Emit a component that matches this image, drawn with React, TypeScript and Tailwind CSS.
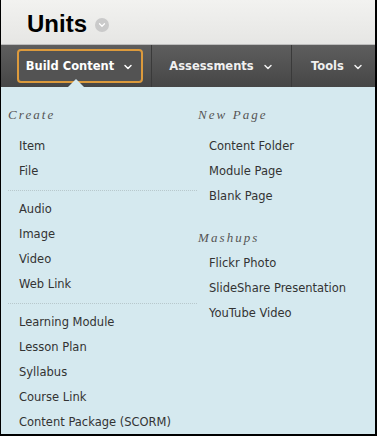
import { ChevronDown } from "lucide-react";

const leftGroups = [
  ["Item", "File"],
  ["Audio", "Image", "Video", "Web Link"],
  ["Learning Module", "Lesson Plan", "Syllabus", "Course Link", "Content Package (SCORM)"],
];

const rightSections = [
  { title: "New Page", items: ["Content Folder", "Module Page", "Blank Page"] },
  { title: "Mashups", items: ["Flickr Photo", "SlideShare Presentation", "YouTube Video"] },
];

function Heading({ text, className = "" }: { text: string; className?: string }) {
  return (
    <div
      className={`h-[20px] leading-[20px] text-[13px] italic tracking-[0.16em] text-[#555] font-['Liberation_Serif',serif] ${className}`}
    >
      {text}
    </div>
  );
}

function MenuItem({ label }: { label: string }) {
  return <div className="h-[25px] flex items-center pl-[11px] text-[11.5px] text-[#333]">{label}</div>;
}

function App() {
  return (
    <div className="w-[377px] h-[436px] overflow-hidden bg-black pl-px pr-[2px] pb-[2px] font-['DejaVu_Sans',sans-serif]">
      {/* page title */}
      <div className="h-[45px] bg-gradient-to-b from-[#f2f2f0] to-[#e6e6e4] flex items-center pl-[26px] gap-[8px] border-b border-[#bdbdbd]">
        <h1 className="text-[24px] font-bold text-black leading-none mt-[3px] font-['Liberation_Sans',sans-serif]">
          Units
        </h1>
        <span className="w-[14px] h-[14px] rounded-full bg-[#cacaca] flex items-center justify-center mt-[5px]">
          <ChevronDown size={10} strokeWidth={3} className="text-white" />
        </span>
      </div>

      {/* nav bar */}
      <div className="h-[42px] bg-gradient-to-b from-[#5e5e5e] to-[#464646] flex text-white text-[11.5px] font-bold">
        <div className="w-[151px] relative flex items-center pl-[16px] border-r border-[#3a3a3a]">
          <div className="h-[34px] w-[126px] border-2 border-[#dc9a3c] rounded-[4px] flex items-center justify-center gap-[8px] bg-[#535353] pt-[1px]">
            Build Content
            <ChevronDown size={12} strokeWidth={3} />
          </div>
          <div className="absolute left-[67px] bottom-0 w-0 h-0 border-l-[8px] border-r-[8px] border-b-[8px] border-l-transparent border-r-transparent border-b-[#d5e9ef]" />
        </div>
        <div className="w-[140px] flex items-center justify-center gap-[8px] border-r border-[#3a3a3a] text-[#f0f0f0] pt-[1px]">
          Assessments
          <ChevronDown size={12} strokeWidth={3} />
        </div>
        <div className="flex-1 flex items-center pl-[19px] gap-[8px] text-[#f0f0f0] pt-[1px]">
          Tools
          <ChevronDown size={12} strokeWidth={3} />
        </div>
      </div>

      {/* dropdown panel */}
      <div className="h-[347px] bg-[#d5e9ef] flex pt-[18px] pl-[7px]">
        <div className="w-[189px]">
          <Heading text="Create" className="mb-[9px]" />
          {leftGroups.map((group, gi) => (
            <div key={gi} className={gi > 0 ? "border-t border-dotted border-[#b8c8cc] mt-[6px] pt-[6px]" : ""}>
              {group.map((label) => (
                <MenuItem key={label} label={label} />
              ))}
            </div>
          ))}
        </div>
        <div className="pl-px">
          {rightSections.map((sec, si) => (
            <div key={sec.title}>
              <Heading text={sec.title} className={si > 0 ? "mt-[19px] mb-[3px]" : "mb-[9px]"} />
              {sec.items.map((label) => (
                <MenuItem key={label} label={label} />
              ))}
            </div>
          ))}
        </div>
      </div>
    </div>
  );
}

export default App;
